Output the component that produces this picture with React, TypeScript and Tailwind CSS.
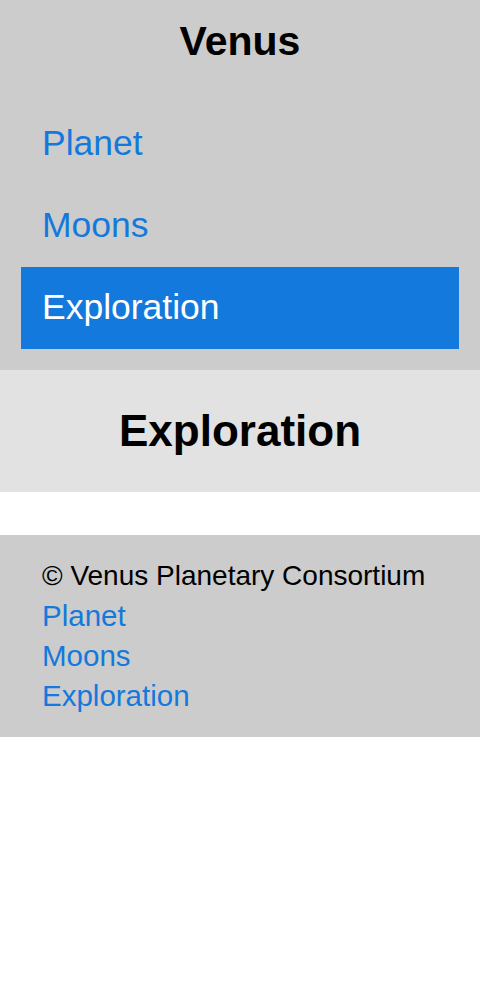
import React from "react";

export default function App() {
  const items = ["Planet", "Moons", "Exploration"];
  return (
    <div className="w-[480px] bg-white font-['Liberation_Sans',Arial,sans-serif]">
      <header className="bg-[#cccccc]">
        <h1 className="h-[82px] flex items-center justify-center text-[41px] font-bold text-black leading-none">Venus</h1>
        <nav className="px-[21px] pt-[21px] pb-[21px]">
          {items.map((it) => (
            <a
              key={it}
              className={
                it === "Exploration"
                  ? "flex items-center h-[82px] px-[21px] bg-[#1479dc] text-white text-[35.5px]"
                  : "flex items-center h-[82px] px-[21px] text-[#1479dc] text-[35.5px]"
              }
            >
              {it}
            </a>
          ))}
        </nav>
      </header>
      <section className="h-[122px] bg-[#e2e2e2] flex items-center justify-center">
        <h2 className="text-[44px] font-bold text-black leading-none">Exploration</h2>
      </section>
      <div className="h-[43px]" />
      <footer className="bg-[#cccccc] px-[42px] py-[21px]">
        <div className="text-black whitespace-nowrap text-[28px] leading-[40px]">© Venus Planetary Consortium</div>
        {items.map((it) => (
          <div key={it} className="text-[29.5px] leading-[40px]">
            <a className="text-[#1479dc]">{it}</a>
          </div>
        ))}
      </footer>
    </div>
  );
}
